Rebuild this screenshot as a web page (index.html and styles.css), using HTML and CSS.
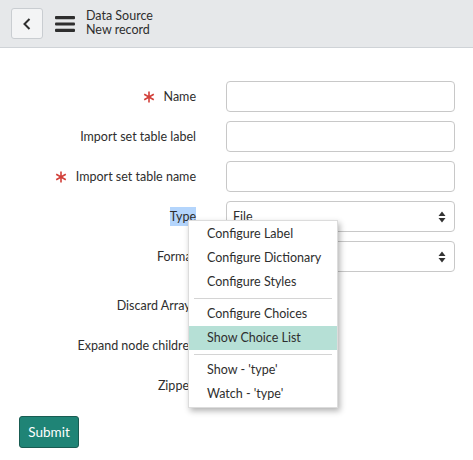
FILE: index.html
```html
<!DOCTYPE html>
<html>
<head>
  <title>Data Source - New record</title>
  <link rel="stylesheet" href="styles.css">
</head>
<body>
  <div class="header">
    <button class="back-btn" type="button">
      <svg width="10" height="12" viewBox="0 0 10 12"><path d="M7.5 1 L2.5 6 L7.5 11" fill="none" stroke="#2e2e2e" stroke-width="2"/></svg>
    </button>
    <svg class="hamburger" width="20" height="16" viewBox="0 0 20 16">
      <rect x="0" y="0" width="20" height="3.2" rx="1" fill="#2e2e2e"/>
      <rect x="0" y="6.4" width="20" height="3.2" rx="1" fill="#2e2e2e"/>
      <rect x="0" y="12.8" width="20" height="3.2" rx="1" fill="#2e2e2e"/>
    </svg>
    <div class="title">
      <div>Data Source</div>
      <div>New record</div>
    </div>
  </div>

  <div class="form">
    <div class="row">
      <label class="lbl"><svg class="req" width="12" height="12" viewBox="0 0 12 12"><path d="M6 0.5 V11.5 M1.2 3.2 L10.8 8.8 M1.2 8.8 L10.8 3.2" stroke="#d2403a" stroke-width="1.6"/></svg>Name</label>
      <div class="input"></div>
    </div>
    <div class="row">
      <label class="lbl">Import set table label</label>
      <div class="input"></div>
    </div>
    <div class="row">
      <label class="lbl"><svg class="req" width="12" height="12" viewBox="0 0 12 12"><path d="M6 0.5 V11.5 M1.2 3.2 L10.8 8.8 M1.2 8.8 L10.8 3.2" stroke="#d2403a" stroke-width="1.6"/></svg>Import set table name</label>
      <div class="input"></div>
    </div>
    <div class="row">
      <label class="lbl"><span class="selected">Type</span></label>
      <div class="input select">
        <span>File</span>
        <svg width="8" height="12" viewBox="0 0 8 12"><path d="M4 0.5 L7.5 5 H0.5 Z M4 11.5 L7.5 7 H0.5 Z" fill="#333"/></svg>
      </div>
    </div>
    <div class="row">
      <label class="lbl">Format</label>
      <div class="input select">
        <span></span>
        <svg width="8" height="12" viewBox="0 0 8 12"><path d="M4 0.5 L7.5 5 H0.5 Z M4 11.5 L7.5 7 H0.5 Z" fill="#333"/></svg>
      </div>
    </div>
    <div class="row check first">
      <label class="lbl">Discard Arrays</label>
      <div class="checkbox"></div>
    </div>
    <div class="row check">
      <label class="lbl">Expand node children</label>
      <div class="checkbox"></div>
    </div>
    <div class="row check">
      <label class="lbl">Zipped</label>
      <div class="checkbox"></div>
    </div>
    <button class="submit" type="button">Submit</button>
  </div>

  <!-- right-click menu on the Type label -->
  <div class="context-menu">
    <div class="item">Configure Label</div>
    <div class="item">Configure Dictionary</div>
    <div class="item">Configure Styles</div>
    <div class="sep"></div>
    <div class="item">Configure Choices</div>
    <div class="item active">Show Choice List</div>
    <div class="sep"></div>
    <div class="item">Show - 'type'</div>
    <div class="item">Watch - 'type'</div>
  </div>
</body>
</html>
```

FILE: styles.css
```css
body {
  margin: 0;
  font-family: 'Lato', 'Liberation Sans', sans-serif;
  font-size: 12.5px;
  color: #2e2e2e;
  background-color: #fff;
}

.header {
  display: flex;
  align-items: center;
  height: 47px;
  padding-left: 11px;
  background-color: #e6e8ea;
  border-bottom: 1px solid #cfd3d7;
}

.back-btn {
  display: flex;
  align-items: center;
  justify-content: center;
  width: 32px;
  height: 31px;
  padding: 0;
  background-color: #f3f4f5;
  border: 1px solid #c9cdd1;
  border-radius: 3px;
}

.hamburger {
  margin-left: 12px;
}

.title {
  margin-left: 11px;
  line-height: 14px;
  margin-top: -1px;
}

.form {
  padding: 33px 18px 0 19px;
}

.row {
  display: grid;
  grid-template-columns: 177px 229px;
  column-gap: 30px;
  align-items: center;
  margin-bottom: 9px;
}

.lbl {
  display: flex;
  align-items: center;
  justify-content: flex-end;
  white-space: nowrap;
}

.req {
  margin-right: 9px;
}

.selected {
  background-color: #b4d5fc;
  padding: 2px 0;
}

.input {
  height: 29px;
  border: 1px solid #c8c8c8;
  border-radius: 4px;
  background-color: #fff;
}

.select {
  display: flex;
  align-items: center;
  justify-content: space-between;
  padding: 0 8px 0 6px;
}

.row.check {
  height: 40px;
  margin-bottom: 0;
}

.row.first {
  margin-top: 13px;
}

.checkbox {
  width: 14px;
  height: 14px;
  border: 1px solid #999;
  border-radius: 2px;
}

.submit {
  margin-top: 11px;
  width: 60px;
  height: 32px;
  padding: 0;
  font-family: inherit;
  font-size: 13.5px;
  color: #fff;
  background-color: #1f8476;
  border: 1px solid #195c52;
  border-radius: 3px;
}

.context-menu {
  position: absolute;
  left: 188px;
  top: 220px;
  width: 148px;
  padding: 1px 0 1px;
  background-color: #fff;
  border: 1px solid #dcdcdc;
  box-shadow: 2px 3px 6px rgba(0, 0, 0, 0.3);
}

.context-menu .item {
  height: 24px;
  line-height: 24px;
  padding-left: 18px;
  white-space: nowrap;
}

.context-menu .item.active {
  background-color: #b6e0d6;
}

.context-menu .sep {
  height: 1px;
  margin: 4px 5px 3px;
  background-color: #d4d4d4;
}
```
